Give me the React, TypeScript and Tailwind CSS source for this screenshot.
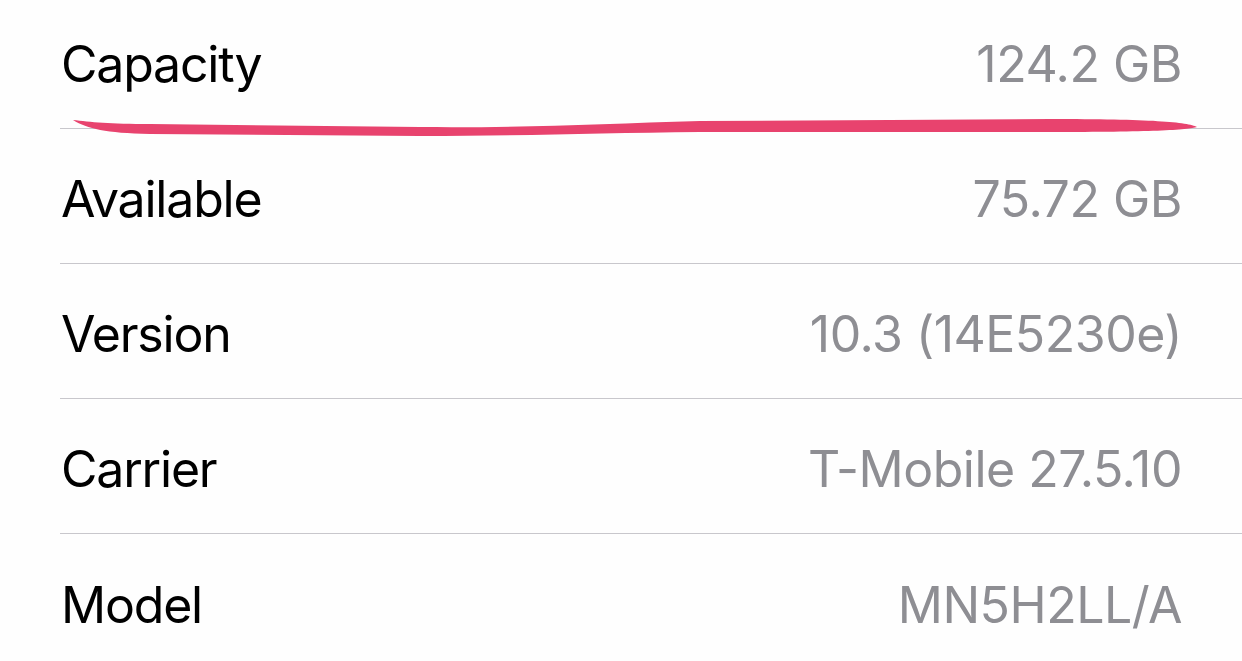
const rows = [
  { label: 'Capacity', value: '124.2 GB' },
  { label: 'Available', value: '75.72 GB' },
  { label: 'Version', value: '10.3 (14E5230e)' },
  { label: 'Carrier', value: 'T-Mobile 27.5.10' },
  { label: 'Model', value: 'MN5H2LL/A' },
];

export default function App() {
  return (
    <div
      className="relative w-[1242px] h-[661px] overflow-hidden bg-[#fefefe]"
      style={{ fontFamily: 'Inter, "Noto Sans", sans-serif' }}
    >
      <div className="-mt-[6px] pl-[60px]">
        {rows.map((row, i) => (
          <div
            key={row.label}
            className={
              'flex h-[135px] items-center justify-between pt-[7px] pr-[60px] ' +
              (i < rows.length - 1 ? 'border-b border-[#c8c7cc]' : '')
            }
          >
            <span className="pl-[1px] text-[50px] tracking-[-1.2px] text-black">
              {row.label}
            </span>
            <span className="text-[50px] tracking-[-0.5px] text-[#8e8e93]">
              {row.value}
            </span>
          </div>
        ))}
      </div>

      {/* marker scribble over the first separator */}
      <svg
        className="absolute left-0 top-0 pointer-events-none"
        width="1242"
        height="661"
        viewBox="0 0 1242 661"
      >
        <path
          d="M73 120 C 90 122 110 124 150 124 L 420 127 C 520 128 600 124 700 121 L 1050 119 C 1150 119 1188 122 1197 127 C 1188 130 1150 132 1050 132 L 700 132 C 600 133 520 136 420 136 L 150 134 C 105 133 88 129 73 120 Z"
          fill="#e8436e"
        />
      </svg>
    </div>
  );
}
